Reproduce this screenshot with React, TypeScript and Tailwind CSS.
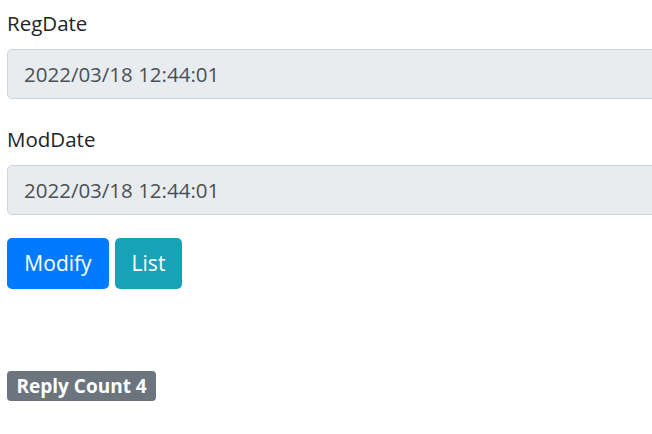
import React from 'react';

const fontStack = "font-['Open_Sans','Noto_Sans',sans-serif]";

const DateField = ({ label, value }: { label: string; value: string }) => (
  <div className="mb-[25px]">
    <label className="block h-[30px] mb-[11px] text-[20.5px] leading-[30px] text-[#212529]">{label}</label>
    <input
      readOnly
      value={value}
      className="block w-[700px] h-[50px] px-[16px] bg-[#e9ecef] border border-[#ced4da] rounded-[5px] text-[20.5px] text-[#495057] outline-none"
    />
  </div>
);

export default function App() {
  return (
    <div className={`w-[652px] h-[434px] overflow-hidden bg-white pt-[8px] pl-[7px] ${fontStack}`}>
      <DateField label="RegDate" value="2022/03/18 12:44:01" />
      <DateField label="ModDate" value="2022/03/18 12:44:01" />
      <div className="flex gap-[6px] -mt-[2px]">
        <button className="h-[51px] w-[102px] bg-[#007bff] text-white text-[21px] rounded-[5px]">Modify</button>
        <button className="h-[51px] w-[67px] bg-[#17a2b8] text-white text-[21px] rounded-[5px]">List</button>
      </div>
      <div className="mt-[82px]">
        <span className="inline-flex items-center h-[30px] px-[9.5px] bg-[#6c757d] text-white text-[19px] font-bold rounded-[4px]">
          Reply Count 4
        </span>
      </div>
    </div>
  );
}
